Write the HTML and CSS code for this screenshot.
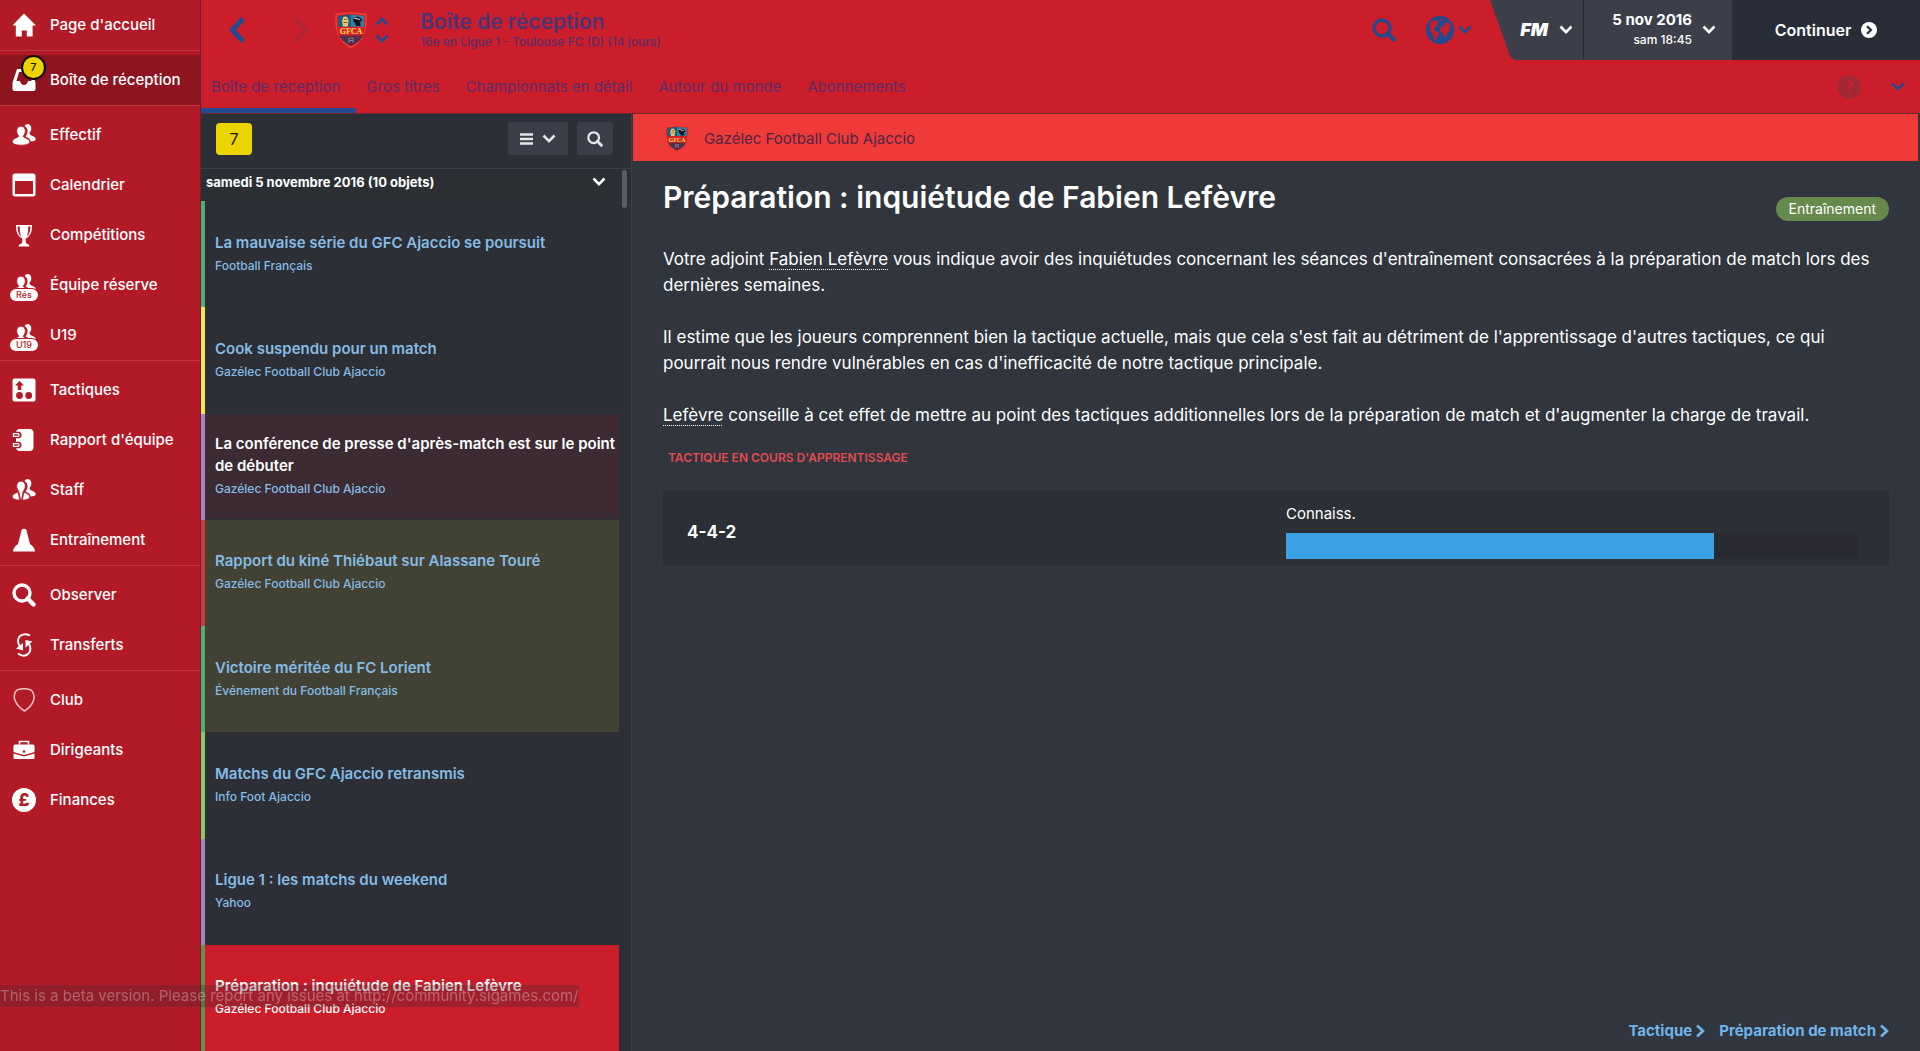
FILE: index.html
```html
<!DOCTYPE html>
<html lang="fr">
<head>
<meta charset="utf-8">
<meta name="viewport" content="width=device-width, initial-scale=1">
<title>Boîte de réception</title>
<link rel="stylesheet" href="styles.css">
</head>
<body>
<svg class="defs" aria-hidden="true">
  <defs>
    <symbol id="chev-down" viewBox="0 0 14 10"><path d="M1.5 1.5 7 7.2 12.500 1.500" fill="none" stroke="currentColor" stroke-width="2.600"/></symbol>
    <symbol id="chev-left" viewBox="0 0 16 26"><path d="M14 1.500 3.500 13 14 24.500" fill="none" stroke="currentColor" stroke-width="5"/></symbol>
    <symbol id="chev-small" viewBox="0 0 9 14"><path d="M1 1.500 7 7 1 12.500" fill="none" stroke="currentColor" stroke-width="2.600"/></symbol>
    <symbol id="loupe" viewBox="0 0 24 24"><circle cx="10" cy="10" r="8" fill="none" stroke="currentColor" stroke-width="3.400"/><path d="M15.500 15.500 21.500 21.500" stroke="currentColor" stroke-width="4.400" stroke-linecap="round"/></symbol>
    <symbol id="people" viewBox="0 0 24 24">
      <path d="M15.500 1c2.300 0 3.800 1.700 3.800 4.300 0 1.900-.8 3.700-1.900 4.700.1 1.400 1.200 2.200 3.300 3 2 .8 3 1.700 3 3.200 0 1.600-2.400 2.200-5 2.300-.5-2.300-2.200-3.800-5.200-4.900 1.400-1.600 2-3.300 2-5.300 0-2.400-1.100-4.200-2.900-5.200C13.200 1.700 14.200 1 15.500 1z" fill="currentColor"/>
      <path d="M9 3.200c2.600 0 4.300 2 4.300 4.700 0 2.300-.9 4.200-2.200 5.200.2 2 6.400 2.200 6.600 5.800.1 2.100-4 3.300-8.800 3.300S.3 21 .3 18.800c0-3.400 5.900-4 6.600-5.700C5.600 12.100 4.700 10.200 4.700 7.900c0-2.700 1.700-4.700 4.300-4.700z" fill="currentColor" stroke="#b31a27" stroke-width=".8"/>
    </symbol>
    <symbol id="crest" viewBox="0 0 32 36">
      <path d="M1.200 2.500Q16-.8 30.800 2.500C32 16 29 29 16 35.300 3 29 0 16 1.200 2.500z" fill="#d5202c" stroke="#f4432f" stroke-width="1.300"/>
      <path d="M3 4q6.500-1.200 13-1.200v12H3z" fill="#24587f"/><path d="M16 2.800q6.500 0 13 1.200v10.800H16z" fill="#2f7fa6"/>
      <path d="M8 5.500q2.500-2 4.500.2l1.200 3-1 5.800H8l-1-5z" fill="#e2c66a"/><path d="M9 7.500h3M8.500 10.500h4" stroke="#8a6a2a"/>
      <path d="M18 6.500q4-3 7.500-.5l2 2.500-2.300 1 .4 4.500h-4.500q-.3-3-2.600-4.500z" fill="#17151c"/><path d="m19 6 6 1.500" stroke="#ddd" stroke-width="1.200"/>
      <path d="M3.600 23h24.800q-3.400 7-12.400 11Q7 30 3.600 23z" fill="#722136"/>
      <path d="M8 23v5.500M12 23v9M20 23v9M24 23v5.500" stroke="#28406e" stroke-width="1.800"/><path d="M14 31v-5h4v5m-4-2.500h4" fill="none" stroke="#6b8aa6"/>
      <path d="M2 15h28l-1.400 8.500H3.400z" fill="#d5202c"/>
      <text x="16" y="22.300" class="crest-text">GFCA</text>
    </symbol>
  </defs>
</svg>

<div class="app">
  <nav class="sidebar" aria-label="Navigation principale">
    <ul>
      <li><a href="#"><svg class="ico" viewBox="0 0 24 24"><path d="M12 .5 24 12.600h-3.400V23.500h-5.800v-6h-5v6H3.800V12.600H.5z" fill="currentColor"/></svg>Page d'accueil</a></li>
    </ul>
    <ul>
      <li><a href="#" class="active"><span class="ico-wrap"><svg class="ico" viewBox="0 0 24 24"><path d="M5 1h14l4.500 13.500V21q0 2-2 2h-19q-2 0-2-2v-6.500zM7 4 4.500 13H8q1 4 4 4t4-4h3.500L17 4z" fill="currentColor" fill-rule="evenodd"/></svg><b class="count">7</b></span>Boîte de réception</a></li>
    </ul>
    <ul>
      <li><a href="#"><svg class="ico"><use href="#people"/></svg>Effectif</a></li>
      <li><a href="#"><svg class="ico" viewBox="0 0 24 24"><path d="M3 .5h18q2.500 0 2.500 2.500v18q0 2.500-2.500 2.500H3Q.5 23.500.5 21V3Q.5.500 3 .5zM3 8v13h18V8z" fill="currentColor" fill-rule="evenodd"/></svg>Calendrier</a></li>
      <li><a href="#"><svg class="ico" viewBox="0 0 24 24"><path d="M4 2h16v1.500q0 9-6.300 12V19q0 1.500 3.500 3v1.500H6.800V22q3.500-1.500 3.500-3v-3.500Q4 12.500 4 3.500zm1.500 1.500Q6 11 9 13.500 7.500 9 7.700 3.500zm13 0h-2.200Q16.500 9 15 13.500q3-2.500 3.500-10z" fill="currentColor" fill-rule="evenodd"/></svg>Compétitions</a></li>
      <li><a href="#"><span class="ico-wrap"><svg class="ico"><use href="#people"/></svg><span class="squad">Rés</span></span>Équipe réserve</a></li>
      <li><a href="#"><span class="ico-wrap"><svg class="ico"><use href="#people"/></svg><span class="squad">U19</span></span>U19</a></li>
    </ul>
    <ul>
      <li><a href="#"><svg class="ico" viewBox="0 0 24 24"><rect x=".5" y=".5" width="23" height="23" rx="2" fill="currentColor"/><path d="M7.500 3 12 7.500H9.300V12H5.700V7.500H3z" fill="#b31a27"/><circle cx="7.500" cy="17.500" r="3.400" fill="#b31a27"/><circle cx="16.700" cy="17.500" r="3.400" fill="#b31a27"/></svg>Tactiques</a></li>
      <li><a href="#"><svg class="ico" viewBox="0 0 24 24"><rect x="4" y="1" width="17.500" height="22" rx="4" fill="currentColor"/><path d="M2.500 5.500h4.500q1.500 1.500 0 3H2.500M2.500 15.500h4.500q1.500 1.500 0 3H2.500" fill="none" stroke="#b31a27" stroke-width="3.600"/><path d="M1.500 5.600h5q1 1.300 0 2.700h-5zM1.500 15.600h5q1 1.300 0 2.700h-5z" fill="none" stroke="currentColor" stroke-width="1.300"/></svg>Rapport d'équipe</a></li>
      <li><a href="#"><svg class="ico" viewBox="0 0 24 24"><use href="#people"/><path d="m6.500 14 1.800 9M11.500 14l-1.800 9" stroke="#b31a27" stroke-width="1.600"/></svg>Staff</a></li>
      <li><a href="#"><svg class="ico" viewBox="0 0 24 24"><path d="M9.800 1.500Q12 0 14.200 1.500L18 16q5 3.500 5 7.500H1Q1 19.500 6 16z" fill="currentColor"/></svg>Entraînement</a></li>
    </ul>
    <ul>
      <li><a href="#"><svg class="ico"><use href="#loupe"/></svg>Observer</a></li>
      <li><a href="#"><svg class="ico" viewBox="0 0 24 24"><path d="M18 2.500Q11.500-.5 7.500 3.500 4.500 7.500 7.500 13M6 20.500Q12 25 16.500 20.500 20 16.500 17 11" fill="none" stroke="currentColor" stroke-width="1.900"/><path d="M4 15.500 11 10v7.500zM20.500 8.500 13.500 7v7.500z" fill="currentColor"/></svg>Transferts</a></li>
    </ul>
    <ul>
      <li><a href="#"><svg class="ico" viewBox="0 0 24 24"><path d="M5 2q7-2.500 14 0 3.500 3 3 9-2 7.500-9.500 12Q5 18.500 2.500 11 1.500 5 5 2z" fill="none" stroke="#f2c4c8" stroke-width="1.500"/></svg>Club</a></li>
      <li><a href="#"><svg class="ico" viewBox="0 0 24 24"><path d="M7.500 6.500V3.500h9v3" fill="none" stroke="currentColor" stroke-width="1.600"/><path d="M3 6.500h18q1.500 0 1.500 1.500v6L12 17 1.500 14V8q0-1.500 1.500-1.500zM1.500 15.500 12 18.500l10.500-3V20q0 1-1 1h-19q-1 0-1-1z" fill="currentColor"/><circle cx="12" cy="13.500" r="1.300" fill="#b31a27"/></svg>Dirigeants</a></li>
      <li><a href="#"><span class="ico pound">£</span>Finances</a></li>
    </ul>
  </nav>

  <div class="content">
    <header class="topbar">
      <div class="title-row">
        <button class="plain" aria-label="Précédent"><svg class="nav-arrow"><use href="#chev-left"/></svg></button>
        <button class="plain forward" aria-label="Suivant" disabled><svg class="nav-arrow"><use href="#chev-left"/></svg></button>
        <svg class="crest"><use href="#crest"/></svg>
        <div class="switch">
          <button class="plain flip" aria-label="Club précédent"><svg><use href="#chev-down"/></svg></button>
          <button class="plain" aria-label="Club suivant"><svg><use href="#chev-down"/></svg></button>
        </div>
        <div class="titles">
          <h1>Boîte de réception</h1>
          <p>16e en Ligue 1 - Toulouse FC (D) (14 jours)</p>
        </div>
        <button class="plain search" aria-label="Rechercher"><svg><use href="#loupe"/></svg></button>
        <button class="plain world" aria-label="Monde"><svg class="globe" viewBox="0 0 28 28"><circle cx="14" cy="14" r="14" fill="currentColor"/><path d="M4.500 6.500 8 4l3 1 1.500 2-2 1 1 2-3 1.500-1 2.500 2.500 1.500 3 1-.5 3-2.500 2.500-.5 3-1.500-1-1-5-2.500-3.500L4 11zM14 3l3-.5-1 2.500zM19 7l3-1 3 4-2 2 1 3-2 1-1.500 4-2 1.500-1.500-4.500-2.500-1-.5-3 2-2.500 2 .5z" fill="#cc1d2b"/></svg><svg class="caret"><use href="#chev-down"/></svg></button>
        <div class="game-bar">
          <button class="fm"><span class="fm-logo">FM</span><svg class="caret"><use href="#chev-down"/></svg></button>
          <button class="date"><span><b>5 nov 2016</b><small>sam 18:45</small></span><svg class="caret"><use href="#chev-down"/></svg></button>
          <button class="continue">Continuer<svg viewBox="0 0 16 16"><circle cx="8" cy="8" r="8" fill="#fff"/><path d="m6 4.200 4 3.800-4 3.800" fill="none" stroke="#282d38" stroke-width="2.200"/></svg></button>
        </div>
      </div>
      <nav class="tabs" aria-label="Sections">
        <a href="#" class="current">Boîte de réception</a>
        <a href="#">Gros titres</a>
        <a href="#">Championnats en détail</a>
        <a href="#">Autour du monde</a>
        <a href="#">Abonnements</a>
        <button class="plain help" aria-label="Aide" disabled>?</button>
        <button class="plain" aria-label="Plus"><svg class="caret"><use href="#chev-down"/></svg></button>
      </nav>
    </header>

    <div class="panes">
      <section class="inbox" aria-label="Messages">
        <div class="inbox-tools">
          <span class="unread">7</span>
          <button aria-label="Affichage" class="tool view"><svg class="bars" viewBox="0 0 13 12"><path d="M0 1.500h13M0 6h13M0 10.500h13" stroke="currentColor" stroke-width="2.400"/></svg><svg class="caret"><use href="#chev-down"/></svg></button>
          <button aria-label="Filtrer" class="tool find"><svg class="lens"><use href="#loupe"/></svg></button>
        </div>
        <div class="scroller">
          <div class="feed">
            <button class="day">samedi 5 novembre 2016 (10 objets)<svg class="caret"><use href="#chev-down"/></svg></button>
            <ul class="mails">
              <li class="c-green"><a href="#"><b>La mauvaise série du GFC Ajaccio se poursuit</b><span>Football Français</span></a></li>
              <li class="c-yellow"><a href="#"><b>Cook suspendu pour un match</b><span>Gazélec Football Club Ajaccio</span></a></li>
              <li class="c-purple urgent"><a href="#"><b>La conférence de presse d'après-match est sur le point de débuter</b><span>Gazélec Football Club Ajaccio</span></a></li>
              <li class="c-red fresh"><a href="#"><b>Rapport du kiné Thiébaut sur Alassane Touré</b><span>Gazélec Football Club Ajaccio</span></a></li>
              <li class="c-green fresh"><a href="#"><b>Victoire méritée du FC Lorient</b><span>Événement du Football Français</span></a></li>
              <li class="c-lime"><a href="#"><b>Matchs du GFC Ajaccio retransmis</b><span>Info Foot Ajaccio</span></a></li>
              <li class="c-purple"><a href="#"><b>Ligue 1 : les matchs du weekend</b><span>Yahoo</span></a></li>
              <li class="c-olive selected"><a href="#" aria-current="true"><b>Préparation : inquiétude de Fabien Lefèvre</b><span>Gazélec Football Club Ajaccio</span></a></li>
            </ul>
          </div>
          <div class="track"><div class="thumb"></div></div>
        </div>
      </section>

      <main class="message">
        <div class="sender"><svg class="crest-small"><use href="#crest"/></svg>Gazélec Football Club Ajaccio</div>
        <article>
          <div class="headline">
            <h2>Préparation : inquiétude de Fabien Lefèvre</h2>
            <span class="tag">Entraînement</span>
          </div>
          <p>Votre adjoint <a href="#">Fabien Lefèvre</a> vous indique avoir des inquiétudes concernant les séances d'entraînement consacrées à la préparation de match lors des dernières semaines.</p>
          <p>Il estime que les joueurs comprennent bien la tactique actuelle, mais que cela s'est fait au détriment de l'apprentissage d'autres tactiques, ce qui pourrait nous rendre vulnérables en cas d'inefficacité de notre tactique principale.</p>
          <p><a href="#">Lefèvre</a> conseille à cet effet de mettre au point des tactiques additionnelles lors de la préparation de match et d'augmenter la charge de travail.</p>
          <h3>TACTIQUE EN COURS D'APPRENTISSAGE</h3>
          <div class="tactic">
            <strong>4-4-2</strong>
            <div class="meter">
              <label for="know">Connaiss.</label>
              <progress id="know" value="75" max="100"></progress>
            </div>
          </div>
        </article>
        <footer class="links">
          <a href="#">Tactique<svg><use href="#chev-small"/></svg></a>
          <a href="#">Préparation de match<svg><use href="#chev-small"/></svg></a>
        </footer>
      </main>
    </div>
  </div>
</div>
<div class="beta">This is a beta version. Please report any issues at http://community.sigames.com/</div>
</body>
</html>
```
FILE: styles.css
```css
:root {
  --red: #cc1d2b;
  --side: #b31a27;
  --blue: #23498f;
  --violet: #5a2d66;
  --panel: #2c2f36;
  --main: #30353e;
  --link: #87bbe4;
}

* { box-sizing: border-box; }

body {
  margin: 0;
  background: var(--main);
  color: #fff;
  font: 15px/20px Inter, "Liberation Sans", sans-serif;
}

ul, p, h1, h2, h3 { margin: 0; padding: 0; }
ul { list-style: none; }
a { color: inherit; text-decoration: none; }
button { font: inherit; color: inherit; border: 0; margin: 0; cursor: pointer; }
svg { display: block; flex: none; }
.defs { position: absolute; width: 0; height: 0; }
.plain { background: none; padding: 0; }
.caret { width: 14px; height: 10px; }

.app { display: grid; grid-template-columns: 201px minmax(0, 1fr); min-height: 100vh; }

/* Sidebar */
.sidebar { background: var(--side); border-right: 1px solid #5f2530; }
.sidebar ul { padding-top: 4px; border-bottom: 1px solid #c63642; }
.sidebar ul:first-child { padding-top: 0; }
.sidebar ul:last-child { border-bottom: 0; }
.sidebar a {
  display: flex;
  align-items: center;
  gap: 14px;
  height: 50px;
  padding-left: 12px;
  font-weight: 500;
  white-space: nowrap;
}
.sidebar .active { background: #8e1520; }
.ico { width: 24px; height: 24px; }
.ico-wrap { position: relative; }
.count {
  position: absolute;
  left: 9px;
  top: -13px;
  width: 25px;
  height: 25px;
  border: 2px solid #0c0b04;
  border-radius: 50%;
  background: #ecd400;
  color: #1a1a1a;
  font: 500 11px/21px Inter, sans-serif;
  text-align: center;
}
.squad {
  position: absolute;
  left: -2px;
  bottom: -4px;
  width: 28px;
  height: 12px;
  border-radius: 6px;
  background: #fff;
  box-shadow: 0 0 0 1px var(--side);
  color: var(--side);
  font: 500 9px/12px Inter, sans-serif;
  text-align: center;
}
.pound {
  border-radius: 50%;
  background: #fff;
  color: var(--side);
  font: 800 17px/24px Inter, sans-serif;
  text-align: center;
}

/* Top bar */
.content { display: flex; flex-direction: column; min-width: 0; }
.topbar { background: var(--red); color: var(--blue); border-bottom: 1px solid #6f2530; }
.title-row { display: flex; align-items: center; height: 60px; padding-left: 28px; }
.nav-arrow { width: 16px; height: 26px; }
.forward { margin-left: 48px; color: #a82637; transform: scaleX(-1); }
.forward .nav-arrow { opacity: .7; }
.crest { width: 32px; height: 36px; margin-left: 26px; }
.crest-text { font: bold 8px "Liberation Serif", serif; fill: #fbe04a; text-anchor: middle; }
.switch { display: grid; gap: 8px; margin-left: 8px; }
.switch svg { width: 14px; height: 10px; }
.flip { transform: scaleY(-1); }
.titles { margin: 0 auto 0 31px; color: #4a3575; }
.titles h1 { font-size: 21px; line-height: 24px; font-weight: 600; }
.titles p { font-size: 12px; line-height: 16px; color: var(--violet); font-weight: 500; }
.search svg { width: 24px; height: 24px; }
.world { display: flex; align-items: center; gap: 4px; margin: 0 18px 0 30px; }
.globe { width: 28px; height: 28px; }

.game-bar { display: flex; height: 60px; color: #fff; }
.game-bar button { display: flex; align-items: center; }
.fm {
  width: 93px;
  justify-content: flex-end;
  gap: 11px;
  padding: 0 10px 0 0;
  background: #3c3e49;
  clip-path: polygon(0 0, 100% 0, 100% 100%, 26px 100%, 22px 97%, 20px 93%);
}
.fm-logo { font-size: 18px; font-weight: 900; font-style: italic; }
.date {
  width: 149px;
  justify-content: flex-end;
  gap: 10px;
  padding: 0 16px 0 0;
  background: #3c3e49;
  border-left: 1px solid #262933;
  text-align: right;
}
.date b, .date small { display: block; }
.date small { font-size: 12px; font-weight: 500; }
.continue { width: 188px; justify-content: center; gap: 10px; padding: 0; background: #282d38; font-size: 16px; font-weight: 600; }
.continue svg { width: 16px; height: 16px; }

.tabs { display: flex; align-items: center; height: 53px; padding-right: 15px; color: var(--violet); }
.tabs a { height: 53px; padding: 0 16px 0 10px; line-height: 53px; white-space: nowrap; }
.tabs .current { box-shadow: inset 0 -5px var(--blue); }
.tabs .help {
  width: 24px;
  height: 24px;
  margin: 0 30px 0 auto;
  border-radius: 50%;
  background: #a32836;
  color: var(--red);
  font-weight: 700;
}
.tabs .caret { color: var(--blue); }

/* Inbox */
.panes { flex: 1; display: grid; grid-template-columns: 431px minmax(0, 1fr); }
.inbox { display: flex; flex-direction: column; background: var(--panel); border-right: 1px solid #3a3f49; }
.inbox-tools { display: flex; align-items: center; gap: 9px; height: 55px; padding: 0 18px 5px 15px; border-bottom: 1px solid #3c4048; }
.unread { width: 36px; height: 32px; margin-right: auto; border-radius: 4px; background: #ecd400; color: #1a1a1a; font-size: 16px; line-height: 32px; text-align: center; }
.tool { display: flex; align-items: center; justify-content: center; height: 33px; padding: 0; border-radius: 3px; background: #3b3d49; color: #e6e6e8; }
.view { width: 60px; gap: 9px; }
.find { width: 36px; }
.bars { width: 13px; height: 12px; }
.lens { width: 16px; height: 16px; }
.scroller { flex: 1; display: flex; }
.feed { flex: 1; display: flex; flex-direction: column; }
.day {
  display: flex;
  align-items: center;
  justify-content: space-between;
  height: 32px;
  padding: 0 13px 6px 5px;
  background: #2b2f33;
  font-size: 13px;
  font-weight: 700;
}
.mails { flex: 1; display: grid; grid-auto-rows: minmax(106px, 1fr); color: var(--link); }
.mails li { border-left: 4px solid; }
.mails a { display: flex; flex-direction: column; justify-content: center; gap: 2px; height: 100%; padding: 0 0 0 10px; border-bottom: 1px solid #2a2d33; color: var(--link); }
.mails b { line-height: 22px; font-weight: 600; }
.mails span { font-size: 12px; font-weight: 500; }
.mails .c-green { border-color: #53ad78; }
.mails .c-yellow { border-color: #f8e650; }
.mails .c-purple { border-color: #a584c0; }
.mails .c-red { border-color: #c93a3c; }
.mails .c-lime { border-color: #8ec56c; }
.mails .c-olive { border-color: #698c4b; }
.urgent { background: #3d2b33; }
.urgent b { color: #fff; }
.mails .fresh a { background: #414234; border-bottom-color: #414234; }
.mails .selected a { background: var(--red); border-bottom-color: var(--red); color: #fff; }
.track { width: 12px; padding: 1px 4px 0 3px; }
.thumb { height: 38px; border-radius: 3px; background: #5b5d63; }

/* Message */
.message { display: flex; flex-direction: column; padding: 0 2px 0 1px; }
.sender { display: flex; align-items: center; gap: 15px; height: 47px; padding: 2px 0 0 32px; background: #f03a3a; color: #4f2545; }
.crest-small { width: 24px; height: 27px; }
article { padding: 16px 29px 0 30px; }
.headline { display: flex; justify-content: space-between; gap: 20px; min-height: 44px; margin-bottom: 25px; }
.headline h2 { font-size: 30px; line-height: 40px; font-weight: 600; }
.tag { align-self: flex-end; padding: 0 13px; border-radius: 12px; background: #658a4c; font-size: 14px; line-height: 24px; }
article p { margin-bottom: 26px; font-size: 17px; line-height: 26px; }
article p a { text-decoration: underline dotted 1px; text-underline-offset: 4px; }
article h3 { margin: -4px 0 25px 5px; color: #e24c4f; font-size: 12px; line-height: 16px; font-weight: 600; }
.tactic { display: grid; grid-template-columns: 12fr 11fr; align-items: center; padding: 13px 32px 6px 0; background: var(--panel); }
.tactic strong { padding: 0 0 0 24px; font-size: 17px; }
.meter label { display: block; margin-bottom: 9px; }
progress { display: block; width: 100%; height: 26px; border: 0; background: #292932; appearance: none; }
progress::-webkit-progress-bar { background: #292932; }
progress::-webkit-progress-value { background: #3aa1e3; }
progress::-moz-progress-bar { background: #3aa1e3; }
.links { display: flex; justify-content: flex-end; gap: 14px; margin-top: auto; padding: 0 29px 10px 0; color: #72b3e8; font-weight: 700; }
.links a { display: flex; align-items: center; gap: 4px; }
.links svg { width: 9px; height: 14px; }

.beta {
  position: fixed;
  left: 0;
  bottom: 44px;
  background: rgba(60, 40, 50, .3);
  color: rgba(255, 255, 255, .3);
  line-height: 22px;
  pointer-events: none;
}
```
